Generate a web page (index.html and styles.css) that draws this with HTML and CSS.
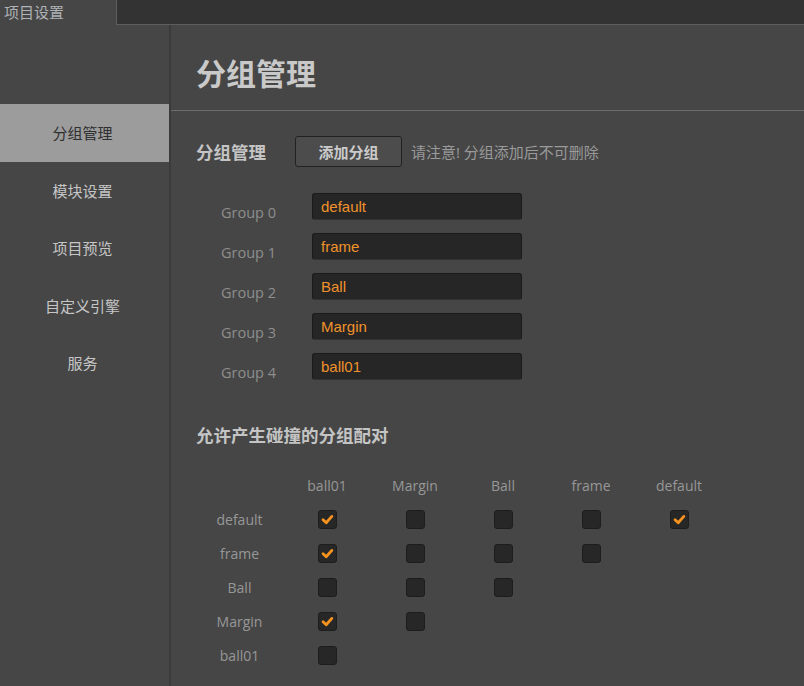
FILE: index.html
```html
<!DOCTYPE html>
<html lang="zh">
<head>
<meta charset="utf-8">
<title>项目设置</title>
<link rel="stylesheet" href="styles.css">
</head>
<body>
<div class="topbar">
  <div class="tab">项目设置</div>
  <div class="tab-rest"></div>
</div>
<div class="layout">
  <nav class="sidebar">
    <div class="nav-item active">分组管理</div>
    <div class="nav-item">模块设置</div>
    <div class="nav-item">项目预览</div>
    <div class="nav-item">自定义引擎</div>
    <div class="nav-item">服务</div>
  </nav>
  <main class="main">
    <header class="page-header"><h1 class="page-title">分组管理</h1></header>

    <section class="group-section">
      <div class="section-bar">
        <h2 class="section-title">分组管理</h2>
        <button class="add-btn">添加分组</button>
        <span class="note">请注意! 分组添加后不可删除</span>
      </div>
      <div class="group-list">
        <div class="group-row"><span class="group-label">Group 0</span><div class="group-input">default</div></div>
        <div class="group-row"><span class="group-label">Group 1</span><div class="group-input">frame</div></div>
        <div class="group-row"><span class="group-label">Group 2</span><div class="group-input">Ball</div></div>
        <div class="group-row"><span class="group-label">Group 3</span><div class="group-input">Margin</div></div>
        <div class="group-row"><span class="group-label">Group 4</span><div class="group-input">ball01</div></div>
      </div>
    </section>

    <section class="pair-section">
      <h2 class="section-title">允许产生碰撞的分组配对</h2>
      <div class="matrix">
        <span class="cell head"></span>
        <span class="cell head">ball01</span>
        <span class="cell head">Margin</span>
        <span class="cell head">Ball</span>
        <span class="cell head">frame</span>
        <span class="cell head">default</span>

        <span class="cell rowlabel">default</span>
        <span class="cell"><i class="cb on"><svg viewBox="0 0 18 18"><path d="M4.3 9.2 L7.6 12.4 L13.6 5.7"/></svg></i></span>
        <span class="cell"><i class="cb"></i></span>
        <span class="cell"><i class="cb"></i></span>
        <span class="cell"><i class="cb"></i></span>
        <span class="cell"><i class="cb on"><svg viewBox="0 0 18 18"><path d="M4.3 9.2 L7.6 12.4 L13.6 5.7"/></svg></i></span>

        <span class="cell rowlabel">frame</span>
        <span class="cell"><i class="cb on"><svg viewBox="0 0 18 18"><path d="M4.3 9.2 L7.6 12.4 L13.6 5.7"/></svg></i></span>
        <span class="cell"><i class="cb"></i></span>
        <span class="cell"><i class="cb"></i></span>
        <span class="cell"><i class="cb"></i></span>
        <span class="cell"></span>

        <span class="cell rowlabel">Ball</span>
        <span class="cell"><i class="cb"></i></span>
        <span class="cell"><i class="cb"></i></span>
        <span class="cell"><i class="cb"></i></span>
        <span class="cell"></span>
        <span class="cell"></span>

        <span class="cell rowlabel">Margin</span>
        <span class="cell"><i class="cb on"><svg viewBox="0 0 18 18"><path d="M4.3 9.2 L7.6 12.4 L13.6 5.7"/></svg></i></span>
        <span class="cell"><i class="cb"></i></span>
        <span class="cell"></span>
        <span class="cell"></span>
        <span class="cell"></span>

        <span class="cell rowlabel">ball01</span>
        <span class="cell"><i class="cb"></i></span>
        <span class="cell"></span>
        <span class="cell"></span>
        <span class="cell"></span>
        <span class="cell"></span>
      </div>
    </section>
  </main>
</div>
</body>
</html>
```

FILE: styles.css
```css
* { box-sizing: border-box; }
html, body { margin: 0; padding: 0; }
body {
  width: 804px;
  height: 686px;
  overflow: hidden;
  background: #464646;
  font-family: "Open Sans", "Noto Sans CJK SC", sans-serif;
  color: #c8c8c8;
}

/* top bar */
.topbar {
  display: flex;
  height: 25px;
}
.tab {
  width: 117px;
  height: 25px;
  padding-left: 4px;
  border-right: 1px solid #5e5e5e;
  background: #464646;
  color: #aeb2b6;
  font-family: "Noto Sans CJK SC", sans-serif;
  font-size: 15px;
  line-height: 24px;
}
.tab-rest {
  flex: 1;
  height: 25px;
  background: #333333;
  border-bottom: 1px solid #5e5e5e;
}

/* layout */
.layout {
  display: flex;
  height: 661px;
}
.sidebar {
  width: 171px;
  flex: none;
  padding-top: 79px;
  border-right: 2px solid #3b3b3b;
  background: #464646;
}
.nav-item {
  height: 57.5px;
  padding-right: 4px;
  display: flex;
  align-items: center;
  justify-content: center;
  font-family: "Noto Sans CJK SC", sans-serif;
  font-size: 15px;
  color: #c6c6c6;
}
.nav-item.active {
  background: #9c9c9c;
  color: #2f2f2f;
}

.main {
  flex: 1;
  min-width: 0;
}
.page-header {
  height: 86px;
  padding: 27px 0 0 25px;
  border-bottom: 1px solid #6c6c6c;
}
.page-title {
  margin: 0;
  font-family: "Noto Sans CJK SC", sans-serif;
  font-size: 30px;
  line-height: 40px;
  font-weight: 700;
  color: #c9c9c9;
}

.group-section {
  padding-left: 25px;
}
.section-bar {
  display: flex;
  align-items: center;
  margin-top: 25px;
  height: 31px;
}
.section-title {
  margin: 0;
  font-family: "Noto Sans CJK SC", sans-serif;
  font-size: 17.5px;
  line-height: 24px;
  font-weight: 700;
  color: #c4c4c4;
}
.add-btn {
  margin-left: 29px;
  width: 107px;
  height: 31px;
  padding: 0;
  border: 1px solid #222222;
  border-radius: 3px;
  background: #4c4c4c;
  color: #cacaca;
  font-family: "Noto Sans CJK SC", sans-serif;
  font-size: 15px;
  font-weight: 700;
  line-height: 29px;
}
.note {
  margin-left: 9px;
  font-family: "Open Sans", "Noto Sans CJK SC", sans-serif;
  font-size: 15px;
  color: #9a9a9a;
}

.group-list {
  margin-top: 26px;
}
.group-row {
  display: flex;
  align-items: flex-start;
  height: 40px;
}
.group-label {
  width: 116px;
  padding-left: 25px;
  margin-top: 10px;
  font-size: 14.5px;
  line-height: 20px;
  color: #8e8e8e;
}
.group-input {
  width: 210px;
  height: 27px;
  padding-left: 8px;
  border: 1px solid #1b1b1b;
  border-bottom-color: #333;
  border-radius: 3px;
  background: #262626;
  font-family: "Liberation Sans", Arial, sans-serif;
  font-size: 15px;
  line-height: 26px;
  color: #f0922b;
}

.pair-section {
  padding-left: 25px;
  margin-top: 30px;
}
.matrix {
  display: grid;
  grid-template-columns: 87px repeat(5, 88px);
  grid-template-rows: 33px repeat(5, 34px);
  margin-top: 22px;
}
.cell {
  display: flex;
  align-items: center;
  justify-content: center;
  font-size: 14px;
  color: #979797;
}
.cb {
  display: block;
  width: 19px;
  height: 19px;
  border: 1px solid #1d1d1d;
  border-radius: 3px;
  background: #272727;
}
.cb svg {
  display: block;
  width: 17px;
  height: 17px;
}
.cb svg path {
  fill: none;
  stroke: #f7931e;
  stroke-width: 3;
  stroke-linecap: round;
  stroke-linejoin: round;
}
```
